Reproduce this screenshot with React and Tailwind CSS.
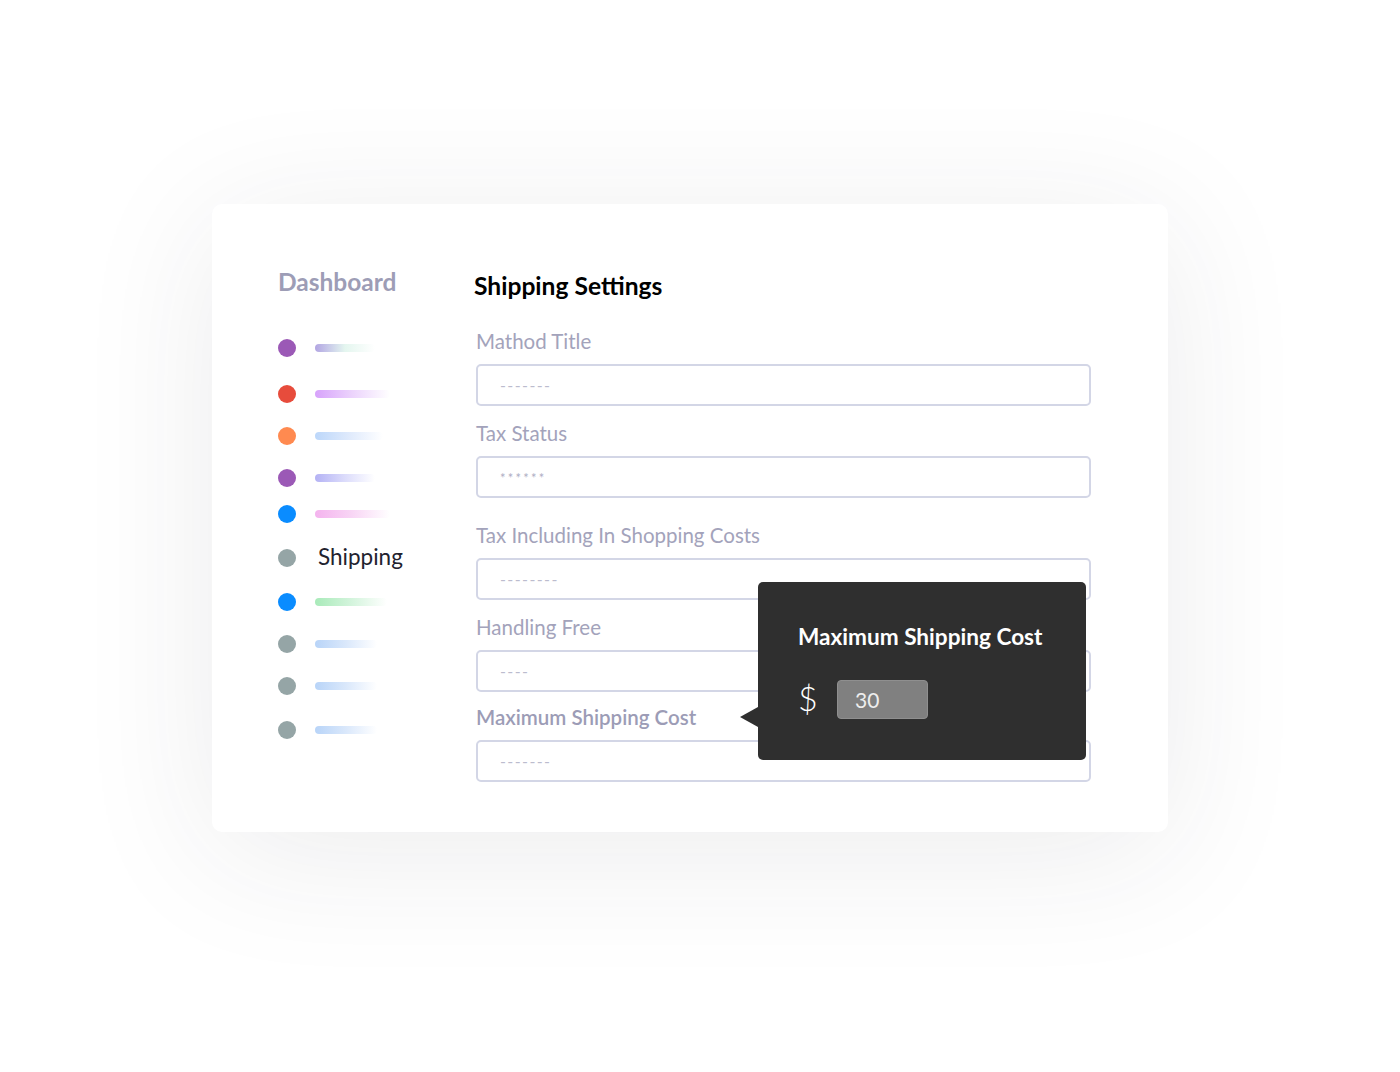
const font = { fontFamily: 'Lato, "Open Sans", sans-serif' }

const rows = [
  { dot: 'bg-[#9b59b6]', bar: 'w-[60px] bg-linear-to-r from-[#b2a5e2] via-[#e4f6ef] to-white', mt: 'mt-[42px]' },
  { dot: 'bg-[#e74c3c]', bar: 'w-[75px] bg-linear-to-r from-[#d7a2fb] via-[#ecd4fc] to-white', mt: 'mt-[28px]' },
  { dot: 'bg-[#ff8a50]', bar: 'w-[68px] bg-linear-to-r from-[#bcd7fa] via-[#dfeafc] to-white', mt: 'mt-[24px]' },
  { dot: 'bg-[#9b59b6]', bar: 'w-[60px] bg-linear-to-r from-[#b4b2f4] via-[#dcdcfb] to-white', mt: 'mt-[24px]' },
  { dot: 'bg-[#0a8cff]', bar: 'w-[75px] bg-linear-to-r from-[#f4b3ee] via-[#f8d6f5] to-white', mt: 'mt-[18px]' },
  { dot: 'bg-[#95a5a6]', label: 'Shipping', mt: 'mt-[26px]' },
  { dot: 'bg-[#0a8cff]', bar: 'w-[72px] bg-linear-to-r from-[#a8eab9] via-[#d3f4dc] to-white', mt: 'mt-[26px]' },
  { dot: 'bg-[#95a5a6]', bar: 'w-[62px] bg-linear-to-r from-[#b8d4f8] via-[#dae8fb] to-white', mt: 'mt-[24px]' },
  { dot: 'bg-[#95a5a6]', bar: 'w-[62px] bg-linear-to-r from-[#b8d4f8] via-[#dae8fb] to-white', mt: 'mt-[24px]' },
  { dot: 'bg-[#95a5a6]', bar: 'w-[62px] bg-linear-to-r from-[#b8d4f8] via-[#dae8fb] to-white', mt: 'mt-[26px]' },
]

const fields = [
  { label: 'Mathod Title', ph: '-------', mt: 'mt-[28px]' },
  { label: 'Tax Status', ph: '******', mt: 'mt-[15px]', stars: true },
  { label: 'Tax Including In Shopping Costs', ph: '--------', mt: 'mt-[25px]' },
  { label: 'Handling Free', ph: '----', mt: 'mt-[15px]' },
  { label: 'Maximum Shipping Cost', ph: '-------', mt: 'mt-[13px]', bold: true },
]

function Field({ f }) {
  return (
    <div>
      <div
        className={`${f.mt} h-[24px] leading-[24px] text-[20.5px] pl-[2px] ${
          f.bold ? 'font-semibold text-[#9c9cb6]' : 'text-[#a3a3bb]'
        }`}
      >
        {f.label}
      </div>
      <div className="mt-[11px] h-[42px] w-[615px] ml-[2px] rounded-[5px] border-2 border-[#d3d6e6] bg-white flex items-center pl-[22px]">
        <span
          className={
            f.stars
              ? 'text-[13px] tracking-[2.2px] text-[#aeaec4] leading-none mt-[2px]'
              : 'text-[16px] tracking-[1.4px] text-[#bcbcce] leading-none'
          }
        >
          {f.ph}
        </span>
      </div>
    </div>
  )
}

export default function App() {
  return (
    <div className="w-[1400px] h-[1072px] bg-white overflow-hidden pt-[204px]" style={font}>
      <div className="relative ml-[212px] w-[956px] h-[628px] bg-white rounded-[10px] shadow-[0_20px_140px_rgba(40,40,60,0.09)] flex">
        {/* Sidebar */}
        <aside className="w-[262px] pl-[66px] pt-[63px] flex-shrink-0">
          <div className="h-[30px] leading-[30px] text-[24.5px] font-bold text-[#9d9db6]">Dashboard</div>
          {rows.map((r, i) => (
            <div key={i} className={`${r.mt} h-[18px] flex items-center`}>
              <span className={`w-[18px] h-[18px] rounded-full ${r.dot} flex-shrink-0`} />
              {r.label ? (
                <span className="ml-[22px] text-[22.5px] text-[#22222e] leading-[18px] -mt-[2px]">{r.label}</span>
              ) : (
                <span className={`ml-[19px] h-[8px] rounded-full ${r.bar}`} />
              )}
            </div>
          ))}
        </aside>

        {/* Main */}
        <main className="pt-[67px]">
          <h1 className="h-[30px] leading-[30px] text-[24.6px] font-bold text-black">Shipping Settings</h1>
          {fields.map((f) => (
            <Field key={f.label} f={f} />
          ))}
        </main>

        {/* Tooltip */}
        <div className="absolute left-[546px] top-[378px] w-[328px] h-[178px] bg-[#2f2f2f] rounded-[5px] pl-[40px] pt-[40px]">
          <span className="absolute left-[-18px] top-[125px] w-0 h-0 border-y-[10px] border-y-transparent border-r-[18px] border-r-[#2f2f2f]" />
          <div className="h-[30px] leading-[30px] text-[22.6px] font-bold text-white">Maximum Shipping Cost</div>
          <div className="mt-[28px] flex items-center">
            <span className="text-[34px] font-light text-white leading-[40px] w-[22px] -mt-[4px]">$</span>
            <div className="ml-[17px] w-[91px] h-[39px] rounded-[4px] bg-[#808080] border border-[#8f8f8f] flex items-center pl-[17px] text-[21px] text-[#eeeeee]">
              30
            </div>
          </div>
        </div>
      </div>
    </div>
  )
}
